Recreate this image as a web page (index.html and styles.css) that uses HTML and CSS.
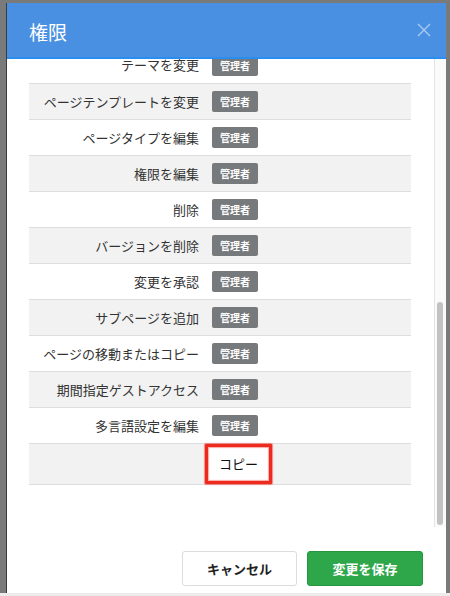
FILE: index.html
```html
<!DOCTYPE html>
<html lang="ja">
<head>
<meta charset="utf-8">
<title>権限</title>
<link rel="stylesheet" href="styles.css">
</head>
<body>
<div class="modal">
  <div class="modal-header">
    <h1 class="modal-title">権限</h1>
    <span class="close">
      <svg width="14" height="14" viewBox="0 0 14 14"><path d="M1 1L13 13M13 1L1 13" stroke="#a9cbf1" stroke-width="1.4" fill="none"/></svg>
    </span>
  </div>
  <div class="modal-body">
    <div class="scroll-content">
      <table class="perm">
        <tbody>
          <tr><td class="label">テーマを変更</td><td class="role"><span class="badge">管理者</span></td></tr>
          <tr><td class="label">ページテンプレートを変更</td><td class="role"><span class="badge">管理者</span></td></tr>
          <tr><td class="label">ページタイプを編集</td><td class="role"><span class="badge">管理者</span></td></tr>
          <tr><td class="label">権限を編集</td><td class="role"><span class="badge">管理者</span></td></tr>
          <tr><td class="label">削除</td><td class="role"><span class="badge">管理者</span></td></tr>
          <tr><td class="label">バージョンを削除</td><td class="role"><span class="badge">管理者</span></td></tr>
          <tr><td class="label">変更を承認</td><td class="role"><span class="badge">管理者</span></td></tr>
          <tr><td class="label">サブページを追加</td><td class="role"><span class="badge">管理者</span></td></tr>
          <tr><td class="label">ページの移動またはコピー</td><td class="role"><span class="badge">管理者</span></td></tr>
          <tr><td class="label">期間指定ゲストアクセス</td><td class="role"><span class="badge">管理者</span></td></tr>
          <tr><td class="label">多言語設定を編集</td><td class="role"><span class="badge">管理者</span></td></tr>
          <tr class="copy-row"><td class="label"></td><td class="role"><span class="mark"><button class="copy-btn" type="button">コピー</button></span></td></tr>
        </tbody>
      </table>
    </div>
    <div class="scrollbar"><div class="thumb"></div></div>
  </div>
  <div class="modal-footer">
    <button class="btn btn-cancel" type="button">キャンセル</button>
    <button class="btn btn-save" type="button">変更を保存</button>
  </div>
</div>
<div class="bottom-strip"></div>
</body>
</html>
```

FILE: styles.css
```css
html, body {
  margin: 0;
  padding: 0;
}
body {
  background: #7a7a7a;
  width: 450px;
  height: 596px;
  overflow: hidden;
  font-family: "Noto Sans CJK JP", "Noto Sans", sans-serif;
  color: #333;
}
.modal {
  margin: 3px 4px 0 6px;
  height: 590px;
  background: #fff;
  border-left: 1px solid #3c3c3c;
  display: flex;
  flex-direction: column;
}
.modal-header {
  height: 54px;
  background: #4a90e2;
  border-bottom: 2px solid #2a8ef0;
  display: flex;
  align-items: center;
  justify-content: space-between;
  padding: 0 15px 0 22px;
  flex-shrink: 0;
}
.modal-title {
  margin: 0;
  color: #fff;
  font-size: 19px;
  font-weight: 400;
  line-height: 1;
  padding-top: 2px;
}
.close {
  display: flex;
  width: 14px;
  height: 14px;
}
.modal-body {
  height: 468px;
  flex-shrink: 0;
  display: flex;
}
.scroll-content {
  flex: 1;
  overflow: hidden;
  padding: 0 0 0 22px;
}
.scrollbar {
  width: 12px;
  flex-shrink: 0;
  box-sizing: border-box;
  background: #fafafa;
  border-left: 1px solid #e4e4e4;
  padding: 243px 3px 0 2px;
}
.thumb {
  height: 223px;
  background: #c2c2c2;
  border-radius: 3px;
}
.perm {
  width: 382px;
  margin-top: -12px;
  border-collapse: collapse;
  font-size: 13px;
}
.perm tr {
  height: 36px;
  border-top: 1px solid #dedede;
}
.perm tr:nth-child(even) {
  background: #f2f2f2;
}
.perm tr:first-child {
  border-top: none;
}
.perm tr:last-child {
  border-bottom: 1px solid #dedede;
  height: 41px;
}
.label {
  width: 170px;
  text-align: right;
  padding: 0 6px 0 0;
  vertical-align: middle;
  color: #333;
  white-space: nowrap;
}
.role {
  padding: 0 0 0 7px;
  vertical-align: middle;
}
.badge {
  display: inline-block;
  background: #777a7d;
  color: #fff;
  font-size: 10px;
  font-weight: 700;
  line-height: 21px;
  height: 21px;
  padding: 0 8px;
  border-radius: 2px;
  vertical-align: middle;
}
.copy-row .role {
  padding-left: 0;
}
.mark {
  display: inline-block;
  border: 3px solid #ee2a1e;
  box-shadow: 0 0 1px 1px rgba(238, 42, 30, 0.5), inset 0 0 1px 1px rgba(238, 42, 30, 0.4);
  padding: 2px;
  border-radius: 1px;
  vertical-align: middle;
  background: #fff;
}
.copy-btn {
  display: block;
  font-family: inherit;
  font-size: 13px;
  color: #111;
  background: #fff;
  border: none;
  padding: 6px 9px;
  line-height: 18px;
  margin: 0;
}
.modal-footer {
  flex: 1;
  display: flex;
  justify-content: flex-end;
  align-items: flex-start;
  gap: 10px;
  padding: 24px 23px 0 0;
}
.btn {
  font-family: inherit;
  font-size: 13px;
  font-weight: 700;
  height: 35px;
  border-radius: 3px;
  margin: 0;
  padding: 0;
}
.btn-cancel {
  width: 115px;
  background: #fff;
  border: 1px solid #dcdcdc;
  color: #222;
}
.btn-save {
  width: 116px;
  background: #2ea64a;
  border: 1px solid #26953f;
  color: #fff;
}
.bottom-strip {
  height: 3px;
  background: #ececec;
}
```
